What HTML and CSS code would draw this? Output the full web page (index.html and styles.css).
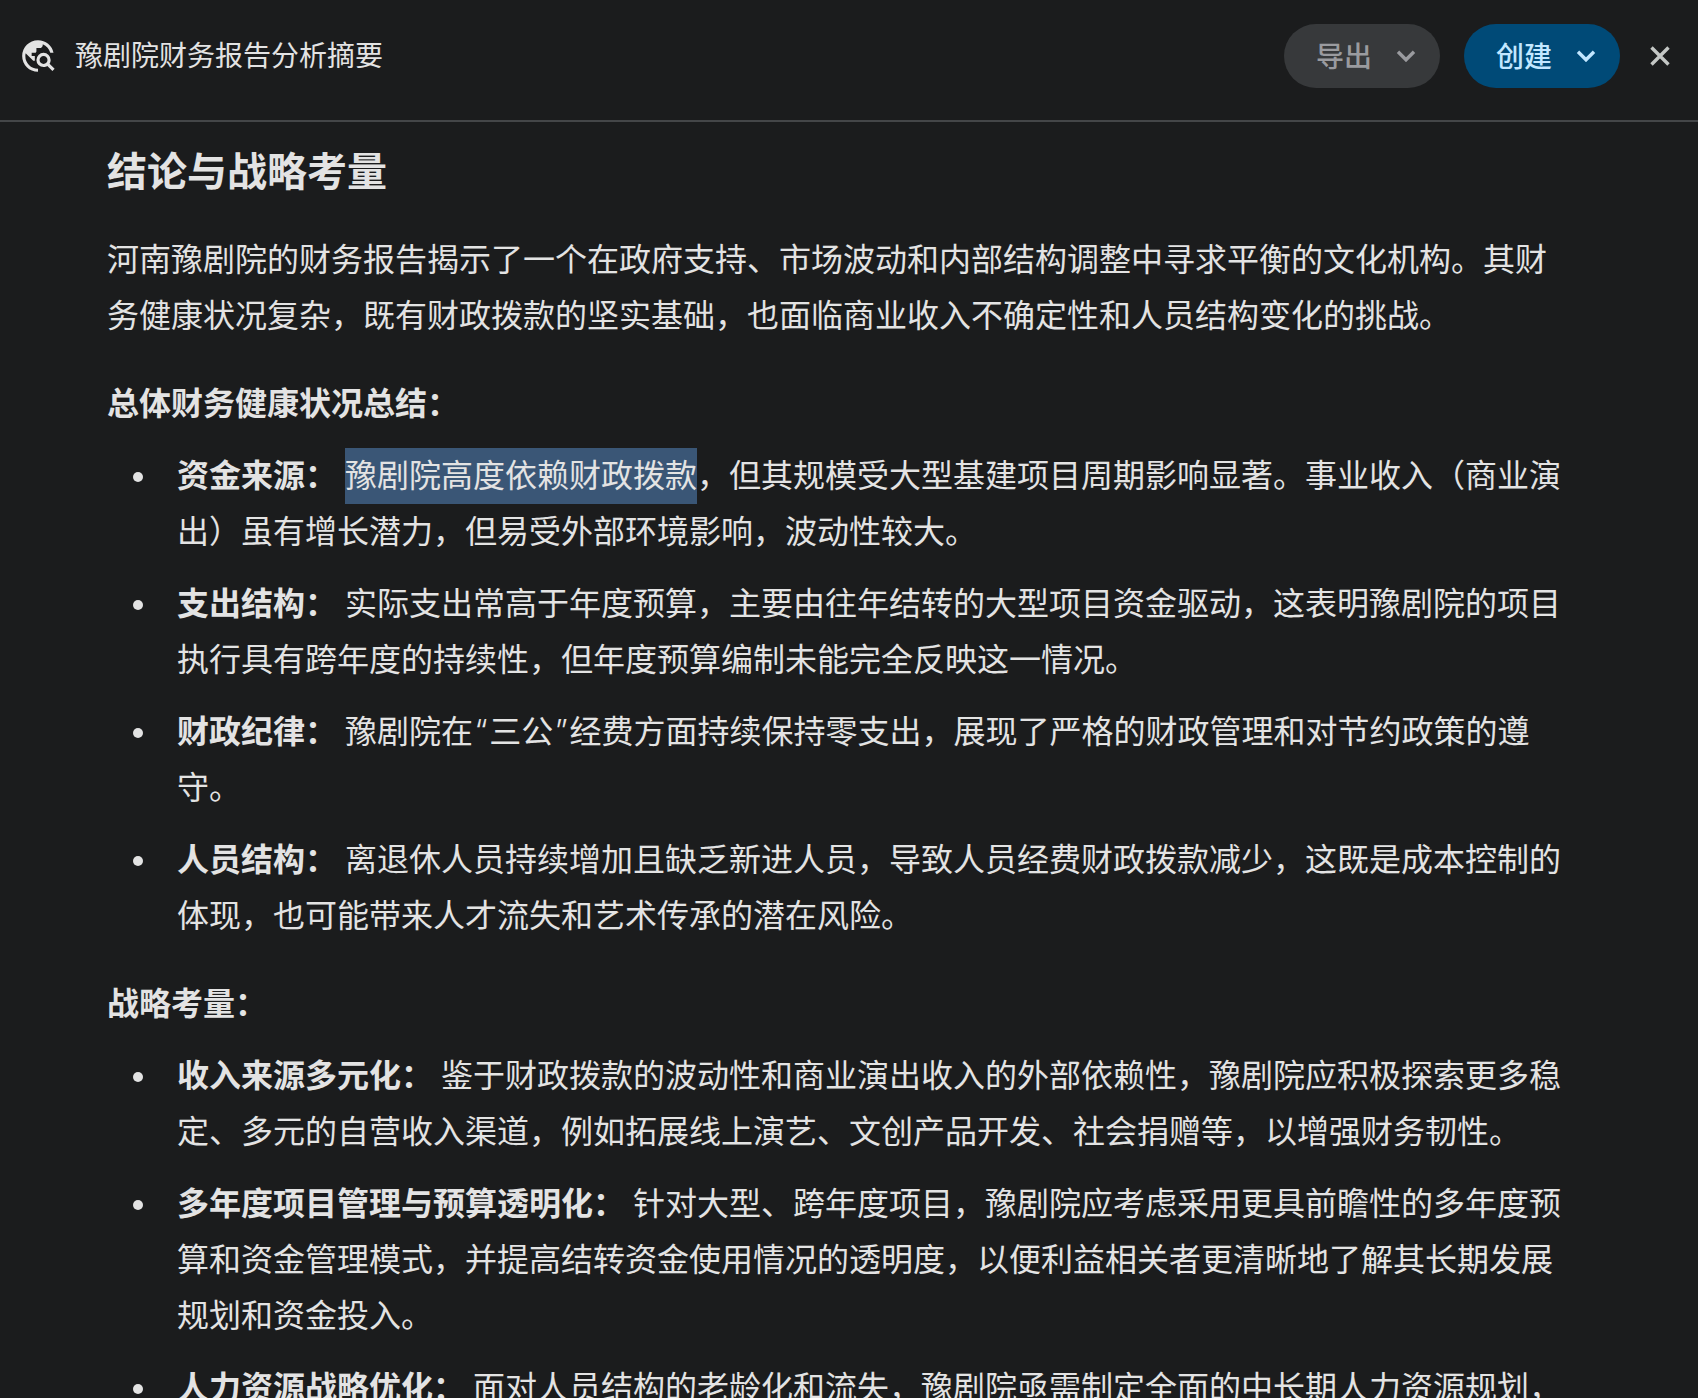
FILE: index.html
```html
<!DOCTYPE html>
<html lang="zh-CN">
<head>
<meta charset="utf-8">
<title>豫剧院财务报告分析摘要</title>
<link rel="stylesheet" href="styles.css">
</head>
<body>
<header class="topbar">
  <svg class="logo" viewBox="0 -960 960 960" aria-hidden="true"><path d="M480-80q-83 0-156-31.5T197-197q-54-54-85.5-127T80-480q0-83 31.5-156T197-763q54-54 127-85.5T480-880q146 0 255.5 91.5T872-559h-82q-19-73-68.5-130.5T600-776v16q0 33-23.5 56.5T520-680h-80v80q0 17-11.5 28.5T400-560h-80v80h80v120h-40L168-552q-3 18-5.5 36t-2.5 36q0 131 92 225t228 95v80Zm364-20L716-228q-21 12-45 20t-51 8q-75 0-127.5-52.5T440-380q0-75 52.5-127.5T620-560q75 0 127.5 52.5T800-380q0 27-8 51t-20 45l128 128-56 56ZM620-280q42 0 71-29t29-71q0-42-29-71t-71-29q-42 0-71 29t-29 71q0 42 29 71t71 29Z"/></svg>
  <div class="doc-title">豫剧院财务报告分析摘要</div>
  <button class="pill pill-export"><span class="pill-label">导出</span><svg class="chev" viewBox="0 0 20 12"><path d="M2 1.8l8 8 8-8"/></svg></button>
  <button class="pill pill-create"><span class="pill-label">创建</span><svg class="chev" viewBox="0 0 20 12"><path d="M2 1.8l8 8 8-8"/></svg></button>
  <svg class="close" viewBox="0 0 20 20" aria-hidden="true"><path d="M1.5 1.5l17 17M18.5 1.5l-17 17"/></svg>
</header>
<main class="doc">
  <h2>结论与战略考量</h2>
  <p>河南豫剧院的财务报告揭示了一个在政府支持、市场波动和内部结构调整中寻求平衡的文化机构。其财务健康状况复杂，既有财政拨款的坚实基础，也面临商业收入不确定性和人员结构变化的挑战。</p>
  <p><strong>总体财务健康状况总结：</strong></p>
  <ul>
    <li><strong>资金来源：</strong> <span class="sel">豫剧院高度依赖财政拨款</span>，但其规模受大型基建项目周期影响显著。事业收入（商业演出）虽有增长潜力，但易受外部环境影响，波动性较大。</li>
    <li><strong>支出结构：</strong> 实际支出常高于年度预算，主要由往年结转的大型项目资金驱动，这表明豫剧院的项目执行具有跨年度的持续性，但年度预算编制未能完全反映这一情况。</li>
    <li><strong>财政纪律：</strong> 豫剧院在<span class="quote">“</span>三公<span class="quote">”</span>经费方面持续保持零支出，展现了严格的财政管理和对节约政策的遵守。</li>
    <li><strong>人员结构：</strong> 离退休人员持续增加且缺乏新进人员，导致人员经费财政拨款减少，这既是成本控制的体现，也可能带来人才流失和艺术传承的潜在风险。</li>
  </ul>
  <p><strong>战略考量：</strong></p>
  <ul>
    <li><strong>收入来源多元化：</strong> 鉴于财政拨款的波动性和商业演出收入的外部依赖性，豫剧院应积极探索更多稳定、多元的自营收入渠道，例如拓展线上演艺、文创产品开发、社会捐赠等，以增强财务韧性。</li>
    <li><strong>多年度项目管理与预算透明化：</strong> 针对大型、跨年度项目，豫剧院应考虑采用更具前瞻性的多年度预算和资金管理模式，并提高结转资金使用情况的透明度，以便利益相关者更清晰地了解其长期发展规划和资金投入。</li>
    <li><strong>人力资源战略优化：</strong> 面对人员结构的老龄化和流失，豫剧院亟需制定全面的中长期人力资源规划，</li>
  </ul>
</main>
</body>
</html>
```
FILE: styles.css
```css
* { box-sizing: border-box; }
html, body { margin: 0; height: 100%; }
body {
  height: 100vh;
  overflow: hidden;
  display: flex;
  flex-direction: column;
  background: #1b1c1d;
  color: #e3e3e3;
  font-family: Roboto, "Noto Sans CJK SC", sans-serif;
}
.topbar {
  flex: none;
  height: 122px;
  display: flex;
  align-items: center;
  padding: 0 28px 8px 19px;
  border-bottom: 2px solid #444648;
}
.logo { width: 38px; height: 38px; fill: #e3e3e3; flex: none; }
.doc-title { flex: 1; margin: 2px 0 0 18px; font-size: 28px; line-height: 36px; color: #e3e3e3; }
.pill {
  width: 156px;
  height: 64px;
  border: 0;
  border-radius: 32px;
  display: flex;
  align-items: center;
  padding: 0 0 0 32px;
  font: 500 28px Roboto, "Noto Sans CJK SC", sans-serif;
}
.pill-label { margin-top: -2px; }
.pill-export { background: #37393b; color: #9a9b9f; margin-right: 24px; }
.pill-create { background: #004a77; color: #c2e7ff; }
.chev { width: 20px; height: 12px; margin-left: 24px; fill: none; stroke: currentColor; stroke-width: 3.4; }
.close { width: 20px; height: 20px; margin-left: 30px; fill: none; stroke: #c4c7c5; stroke-width: 3.4; }
.doc { padding: 23px 130px 0 107px; font-size: 32px; line-height: 56px; }
h2 { margin: 0 0 31px; font-size: 40px; line-height: 56px; font-weight: 600; }
p { margin: 0 0 32px; }
ul { margin: -16px 0 32px; padding: 0 0 0 70px; list-style: none; }
li { position: relative; margin-bottom: 16px; }
li::before {
  content: "";
  position: absolute;
  left: -44px;
  top: 24px;
  width: 10px;
  height: 10px;
  border-radius: 50%;
  background: #e3e3e3;
}
strong { font-weight: 600; }
.quote { font-family: Inter, sans-serif; font-weight: 300; padding: 0 1.6px; }
.sel { display: inline-block; background: #3a5676; }
```
